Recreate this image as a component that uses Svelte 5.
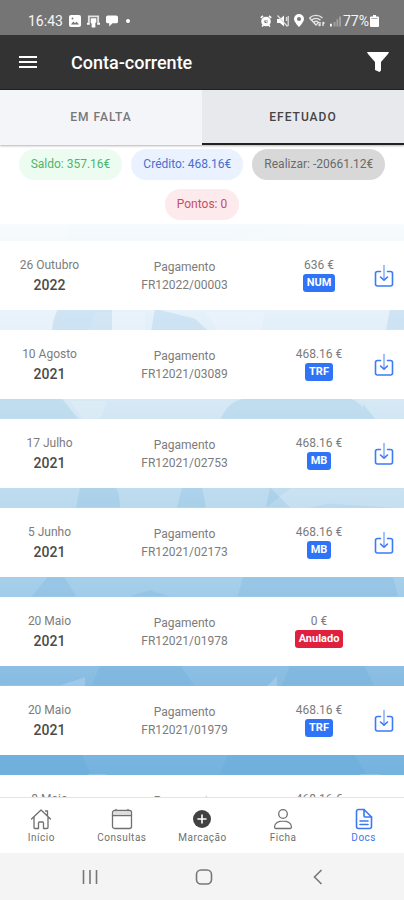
<script lang="ts">
  type Payment = {
    day: string;
    year: string;
    doc: string;
    amount: string;
    method: string;
    cancelled?: boolean;
  };

  const chips = [
    { label: "Saldo: 357.16€", tone: "green" },
    { label: "Crédito: 468.16€", tone: "blue" },
    { label: "Realizar: -20661.12€", tone: "grey" },
    { label: "Pontos: 0", tone: "red" },
  ];

  const payments: Payment[] = [
    { day: "26 Outubro", year: "2022", doc: "FR12022/00003", amount: "636 €", method: "NUM" },
    { day: "10 Agosto", year: "2021", doc: "FR12021/03089", amount: "468.16 €", method: "TRF" },
    { day: "17 Julho", year: "2021", doc: "FR12021/02753", amount: "468.16 €", method: "MB" },
    { day: "5 Junho", year: "2021", doc: "FR12021/02173", amount: "468.16 €", method: "MB" },
    { day: "20 Maio", year: "2021", doc: "FR12021/01978", amount: "0 €", method: "Anulado", cancelled: true },
    { day: "20 Maio", year: "2021", doc: "FR12021/01979", amount: "468.16 €", method: "TRF" },
    { day: "8 Maio", year: "2021", doc: "FR12021/01802", amount: "468.16 €", method: "TRF" },
  ];

  const navItems = [
    { id: "home", label: "Início" },
    { id: "calendar", label: "Consultas" },
    { id: "add", label: "Marcação" },
    { id: "person", label: "Ficha" },
    { id: "docs", label: "Docs" },
  ];

  let activeTab = $state("efetuado");
  let activeNav = $state("docs");
</script>

<div class="screen">
  <div class="status-bar">
    <div class="status-group">
      <span class="clock">16:43</span>
      <svg width="12" height="12" viewBox="0 0 12 12">
        <rect width="12" height="12" rx="2" fill="#fff"/>
        <path d="M2 9.5l2.300-3 1.700 1.800 1.500-1.500L10 9.500z" fill="#757575"/>
        <circle cx="3.500" cy="3.500" r="1" fill="#757575"/>
      </svg>
      <svg width="13" height="14" viewBox="0 0 14 14" fill="#fff">
        <path d="M1 1h12v8h-2V3H3v6H1z" opacity="0.8"/>
        <path d="M4 4h6v5H9v5H5V9.500H4z"/>
        <path d="M0 9h3v2H0zM11 9h3v2h-3z"/>
      </svg>
      <svg width="12" height="12" viewBox="0 0 13 12" fill="#fff">
        <path d="M2 0h9a2 2 0 0 1 2 2v4.500a2 2 0 0 1-2 2H7L3.500 12V8.500H2a2 2 0 0 1-2-2V2a2 2 0 0 1 2-2z"/>
      </svg>
      <span class="dot"></span>
    </div>
    <div class="status-group right">
      <svg width="12" height="12" viewBox="0 0 12 12" fill="none" stroke="#fff">
        <circle cx="6" cy="6.500" r="3.300" stroke-width="3"/>
        <path d="M6 4.500v2.300h1.500" stroke-width="1"/>
        <path d="M0.800 2.800L3 0.800M11.200 2.800L9 0.800M2 11.500l1.500-1.500M10 11.500L8.500 10" stroke-width="1.600"/>
      </svg>
      <svg width="12" height="12" viewBox="0 0 12 12">
        <path d="M0 4h3l4-3.500v11L3 8H0z" fill="#fff"/>
        <path d="M0.500 0.500l10 11M9.500 2v4M11.200 1v10" stroke="#ddd" stroke-width="1.300"/>
      </svg>
      <svg width="10" height="13" viewBox="0 0 10 13">
        <path d="M5 0a5 5 0 0 1 5 5c0 3-5 8-5 8S0 8 0 5a5 5 0 0 1 5-5zM5 3a2 2 0 1 0 0 4 2 2 0 0 0 0-4z" fill="#fff" fill-rule="evenodd"/>
      </svg>
      <svg width="16" height="13" viewBox="0 0 16 13" fill="none" stroke="#e4e4e4" stroke-width="1.400">
        <path d="M0.500 4C4 0.500 10 0.500 13.500 4M2.500 6.200c2.500-2.400 6.500-2.400 9 0M4.700 8.300c1.500-1.400 3-1.400 4.600 0"/>
        <path d="M0.500 4L7 11l3-3M11 8v4M9.500 10.500L11 12M14 12V8M14 8l1.500 1.500"/>
      </svg>
      <svg width="11" height="12" viewBox="0 0 12 12">
        <path d="M0 9h2v3H0z" fill="#fff"/>
        <path d="M4 7h2v5H4zM7 4h2v8H7zM10 1h2v11h-2z" fill="#a2a2a2"/>
      </svg>
      <span class="battery-text">77%</span>
      <svg width="9" height="12" viewBox="0 0 9 12">
        <path d="M3 0h3v1.500h2a1 1 0 0 1 1 1V11a1 1 0 0 1-1 1H1a1 1 0 0 1-1-1V2.500a1 1 0 0 1 1-1h2z" fill="#fff"/>
        <path d="M1.500 3h6v1h-6z" fill="#aaa"/>
      </svg>
    </div>
  </div>

  <header class="header">
    <button class="icon-btn" aria-label="Menu">
      <svg width="20" height="14" viewBox="0 0 20 14" stroke="#fff" stroke-width="2">
        <path d="M1 2h18M1 7h18M1 12h18"/>
      </svg>
    </button>
    <h1>Conta-corrente</h1>
    <button class="icon-btn" aria-label="Filtrar">
      <svg width="24" height="22" viewBox="0 0 24 22">
        <path d="M1 1h22l-1 2-7 8v8.500l-1.500 1.500L9 19v-8L2 3z" fill="#fff"/>
      </svg>
    </button>
  </header>

  <div class="tabs" role="tablist">
    <button role="tab" aria-selected={activeTab === "falta"} class:active={activeTab === "falta"} onclick={() => (activeTab = "falta")}>EM FALTA</button>
    <button role="tab" aria-selected={activeTab === "efetuado"} class:active={activeTab === "efetuado"} onclick={() => (activeTab = "efetuado")}>EFETUADO</button>
  </div>

  <div class="chips">
    {#each chips as chip}
      <span class="chip {chip.tone}">{chip.label}</span>
    {/each}
  </div>

  <main class="content">
    <svg class="backdrop" viewBox="0 0 404 574" preserveAspectRatio="none" aria-hidden="true">
      <g fill="#fff" opacity="0.18">
        <path d="M0 0h70l-18 110H0zM220 18L300 0h104v18zM95 88h50v20H88zM205 88h60l-4 20h-42z"/>
        <path d="M70 177h38l-8 18H82zM265 285l25-20h114v20l-75-5-45 10zM118 285h62l-5 20h-53z"/>
        <path d="M66 374h88l-6 20H78z"/>
        <path d="M0 462h60l25-8v30H50zM265 465l12-12v20zM88 551h18l-10 20zM360 551h20l6 20h-16z"/>
      </g>
      <g fill="#4b9bd2" opacity="0.14">
        <path d="M58 86q-6 10-6 22h60V86zM155 85l40 10 14 13h-58zM390 86h14v20h-18z"/>
        <path d="M0 175h62l16 20H0zM221 195q6-16 22-20h108q12 4 18 20zM363 180l12 15h-12z"/>
        <path d="M80 264h36q4 8 4 20H76zM182 264h20l4 20h-29zM270 264l20 20h-24z"/>
        <path d="M48 353h16l12 20H32zM130 373l20-6 20 6zM243 353h150l5 20H238z"/>
        <path d="M100 442h80l14 20H92zM290 442h74l10 20h-92zM0 531h82l8 20H0zM228 531h126l12 20H220z"/>
      </g>
    </svg>
    <ul class="payments">
      {#each payments as p}
        <li class="payment">
          <div class="date">
            <span>{p.day}</span>
            <strong>{p.year}</strong>
          </div>
          <div class="doc">
            <span>Pagamento</span>
            <span>{p.doc}</span>
          </div>
          <div class="amount">
            <span>{p.amount}</span>
            <span class="badge" class:cancelled={p.cancelled}>{p.method}</span>
          </div>
          {#if !p.cancelled}
            <button class="download" aria-label="Descarregar {p.doc}">
              <svg width="20" height="24" viewBox="0 0 20 24" fill="none" stroke="#3b7bf6" stroke-width="1.600" stroke-linecap="round" stroke-linejoin="round">
                <path d="M6.500 7.500H3.500a2 2 0 0 0-2 2V20a2 2 0 0 0 2 2h13a2 2 0 0 0 2-2V9.500a2 2 0 0 0-2-2h-3"/>
                <path d="M10 1.500v14" stroke="#8db2fa"/>
                <path d="M6.500 13l3.500 3.200 3.500-3.200"/>
              </svg>
            </button>
          {/if}
        </li>
      {/each}
    </ul>
  </main>

  <nav class="bottom-nav">
    {#each navItems as item}
      <button class:active={activeNav === item.id} onclick={() => (activeNav = item.id)}>
        <svg width="22" height="22" viewBox="0 0 22 22" fill="none" stroke="currentColor" stroke-width="1.300" stroke-linecap="round" stroke-linejoin="round">
          {#if item.id === "home"}
            <path d="M1.500 11L11 2l9.500 9M15.500 3h2v5M4 9v10.500a1 1 0 0 0 1 1h3.500V15a1 1 0 0 1 1-1h3a1 1 0 0 1 1 1v5.500H17a1 1 0 0 0 1-1V9"/>
          {:else if item.id === "calendar"}
            <rect x="1.500" y="2.500" width="19" height="18" rx="2"/>
            <path d="M1.500 7.500h19M5 1.500v1M17 1.500v1"/>
            <path d="M3 5h16" stroke-opacity="0.300"/>
          {:else if item.id === "add"}
            <circle cx="11" cy="11" r="9" fill="#424242" stroke="none"/>
            <path d="M11 7v8M7 11h8" stroke="#fff" stroke-width="1.600"/>
          {:else if item.id === "person"}
            <circle cx="11" cy="6" r="4.300"/>
            <path d="M11 12.800c-4.500 0-8.500 2.500-8.500 6.200 0 .9.500 1.500 1.300 1.500h14.400c.8 0 1.300-.6 1.300-1.500 0-3.700-4-6.200-8.500-6.200z"/>
          {:else}
            <path d="M5.500 1.500H11l7.500 7.500v9.500a2 2 0 0 1-2 2h-11a2 2 0 0 1-2-2v-15a2 2 0 0 1 2-2z" stroke-width="1.600"/>
            <path d="M11 1.500V8a1 1 0 0 0 1 1h6.500M7 13h8M7 16.500h8" stroke-width="1.600"/>
          {/if}
        </svg>
        <span>{item.label}</span>
      </button>
    {/each}
  </nav>

  <div class="system-nav">
    <button aria-label="Recentes">
      <svg width="16" height="16" viewBox="0 0 16 16" stroke="#777" stroke-width="1.600"><path d="M1.500 1v14M8 1v14M14.500 1v14"/></svg>
    </button>
    <button aria-label="Ecrã principal">
      <svg width="18" height="16" viewBox="0 0 18 16" fill="none" stroke="#777" stroke-width="1.600"><rect x="1.500" y="1" width="15" height="14" rx="4.500"/></svg>
    </button>
    <button aria-label="Voltar">
      <svg width="16" height="16" viewBox="0 0 16 16" fill="none" stroke="#777" stroke-width="1.600"><path d="M11.500 1L4.500 8l7 7"/></svg>
    </button>
  </div>
</div>

<style>
  :global(body) {
    margin: 0;
    background: #fff;
  }

  .screen {
    display: flex;
    flex-direction: column;
    height: 100vh;
    overflow: hidden;
    font-family: Roboto, "Liberation Sans", sans-serif;
    font-size: 12px;
    color: #7c7c7c;
  }

  button {
    border: 0;
    padding: 0;
    background: none;
    font: inherit;
    color: inherit;
    cursor: pointer;
  }

  svg {
    display: block;
    flex-shrink: 0;
  }

  .status-bar {
    display: flex;
    align-items: center;
    justify-content: space-between;
    height: 35px;
    padding: 6px 25px 0 28px;
    box-sizing: border-box;
    background: #757575;
    color: #f5f5f5;
    flex-shrink: 0;
  }

  .status-group {
    display: flex;
    align-items: center;
    gap: 6px;
  }

  .status-group.right {
    gap: 5px;
  }

  .clock {
    font-size: 14px;
  }

  .battery-text {
    font-size: 14px;
    margin: 0 -4px 0 -3px;
  }

  .dot {
    width: 4px;
    height: 4px;
    margin-left: 2px;
    border-radius: 50%;
    background: #fff;
  }

  .header {
    display: flex;
    align-items: center;
    height: 55px;
    padding: 0 14px 0 18px;
    box-sizing: border-box;
    background: #333;
    border-bottom: 1px solid #222;
    flex-shrink: 0;
  }

  .header h1 {
    flex: 1;
    margin: 0 0 0 33px;
    color: #fff;
    font-size: 18px;
    font-weight: 500;
  }

  .tabs {
    display: grid;
    grid-template-columns: 1fr 1fr;
    height: 55px;
    background: #f4f5f9;
    box-shadow: 0 1px 2px rgba(0, 0, 0, 0.3);
    flex-shrink: 0;
    z-index: 1;
  }

  .tabs button {
    color: #777;
    font-weight: 500;
    letter-spacing: 1px;
    border-bottom: 2px solid transparent;
  }

  .tabs button.active {
    background: #e8e9ed;
    color: #444;
    border-bottom-color: #222;
  }

  .chips {
    display: flex;
    flex-wrap: wrap;
    justify-content: center;
    gap: 9px;
    padding: 4px 8px;
    background: #fff;
    flex-shrink: 0;
  }

  .chip {
    padding: 0 12px;
    line-height: 31px;
    border-radius: 16px;
    font-size: 12px;
  }

  .chip.green {
    background: #edfcf0;
    color: #4fb46c;
  }

  .chip.blue {
    background: #e9f2fe;
    color: #4a6fd0;
  }

  .chip.grey {
    background: #d8d8d8;
    color: #6a6a6a;
  }

  .chip.red {
    background: #fdeaed;
    color: #c44e62;
  }

  .content {
    position: relative;
    flex: 1;
    min-height: 0;
    overflow: hidden;
    background: linear-gradient(#f5fafd 0%, #e4f0f9 17%, #d3e7f4 33%, #b9d9ee 50%, #a1cce9 65%, #88bce2 80%, #70b1de 100%);
  }

  .backdrop {
    position: absolute;
    inset: 0;
    width: 100%;
    height: 100%;
  }

  .payments {
    position: relative;
    display: flex;
    flex-direction: column;
    gap: 20px;
    margin: 0;
    padding: 17px 0 0;
    list-style: none;
  }

  .payment {
    display: grid;
    grid-template-columns: 99fr 171fr 98fr 36fr;
    align-items: center;
    height: 69px;
    background: #fff;
    text-align: center;
  }

  .date,
  .doc,
  .amount {
    display: flex;
    flex-direction: column;
    align-items: center;
    line-height: 18px;
  }

  .date {
    gap: 2px;
    padding-bottom: 2px;
  }

  .date strong {
    color: #4a4a4a;
    font-size: 14px;
    font-weight: 500;
  }

  .amount {
    padding-bottom: 4px;
  }

  .badge {
    padding: 0 4px;
    border-radius: 3px;
    background: #2f73f6;
    color: #fff;
    font-size: 11px;
    font-weight: 700;
  }

  .badge.cancelled {
    background: #e0203f;
  }

  .download {
    justify-self: center;
    padding-right: 5px;
  }

  .bottom-nav {
    display: grid;
    grid-template-columns: repeat(5, 1fr);
    height: 56px;
    padding: 2px 0 0 1px;
    background: #fff;
    border-top: 1px solid #e4e4e4;
    box-sizing: border-box;
    flex-shrink: 0;
  }

  .bottom-nav button {
    display: flex;
    flex-direction: column;
    align-items: center;
    justify-content: center;
    gap: 1px;
    color: #707070;
    font-size: 10px;
    line-height: 14px;
    letter-spacing: 0.5px;
  }

  .bottom-nav button.active {
    color: #3c78ee;
  }

  .system-nav {
    display: flex;
    align-items: center;
    justify-content: center;
    gap: 97px;
    height: 47px;
    padding-left: 3px;
    background: #f4f4f4;
    flex-shrink: 0;
  }
</style>
